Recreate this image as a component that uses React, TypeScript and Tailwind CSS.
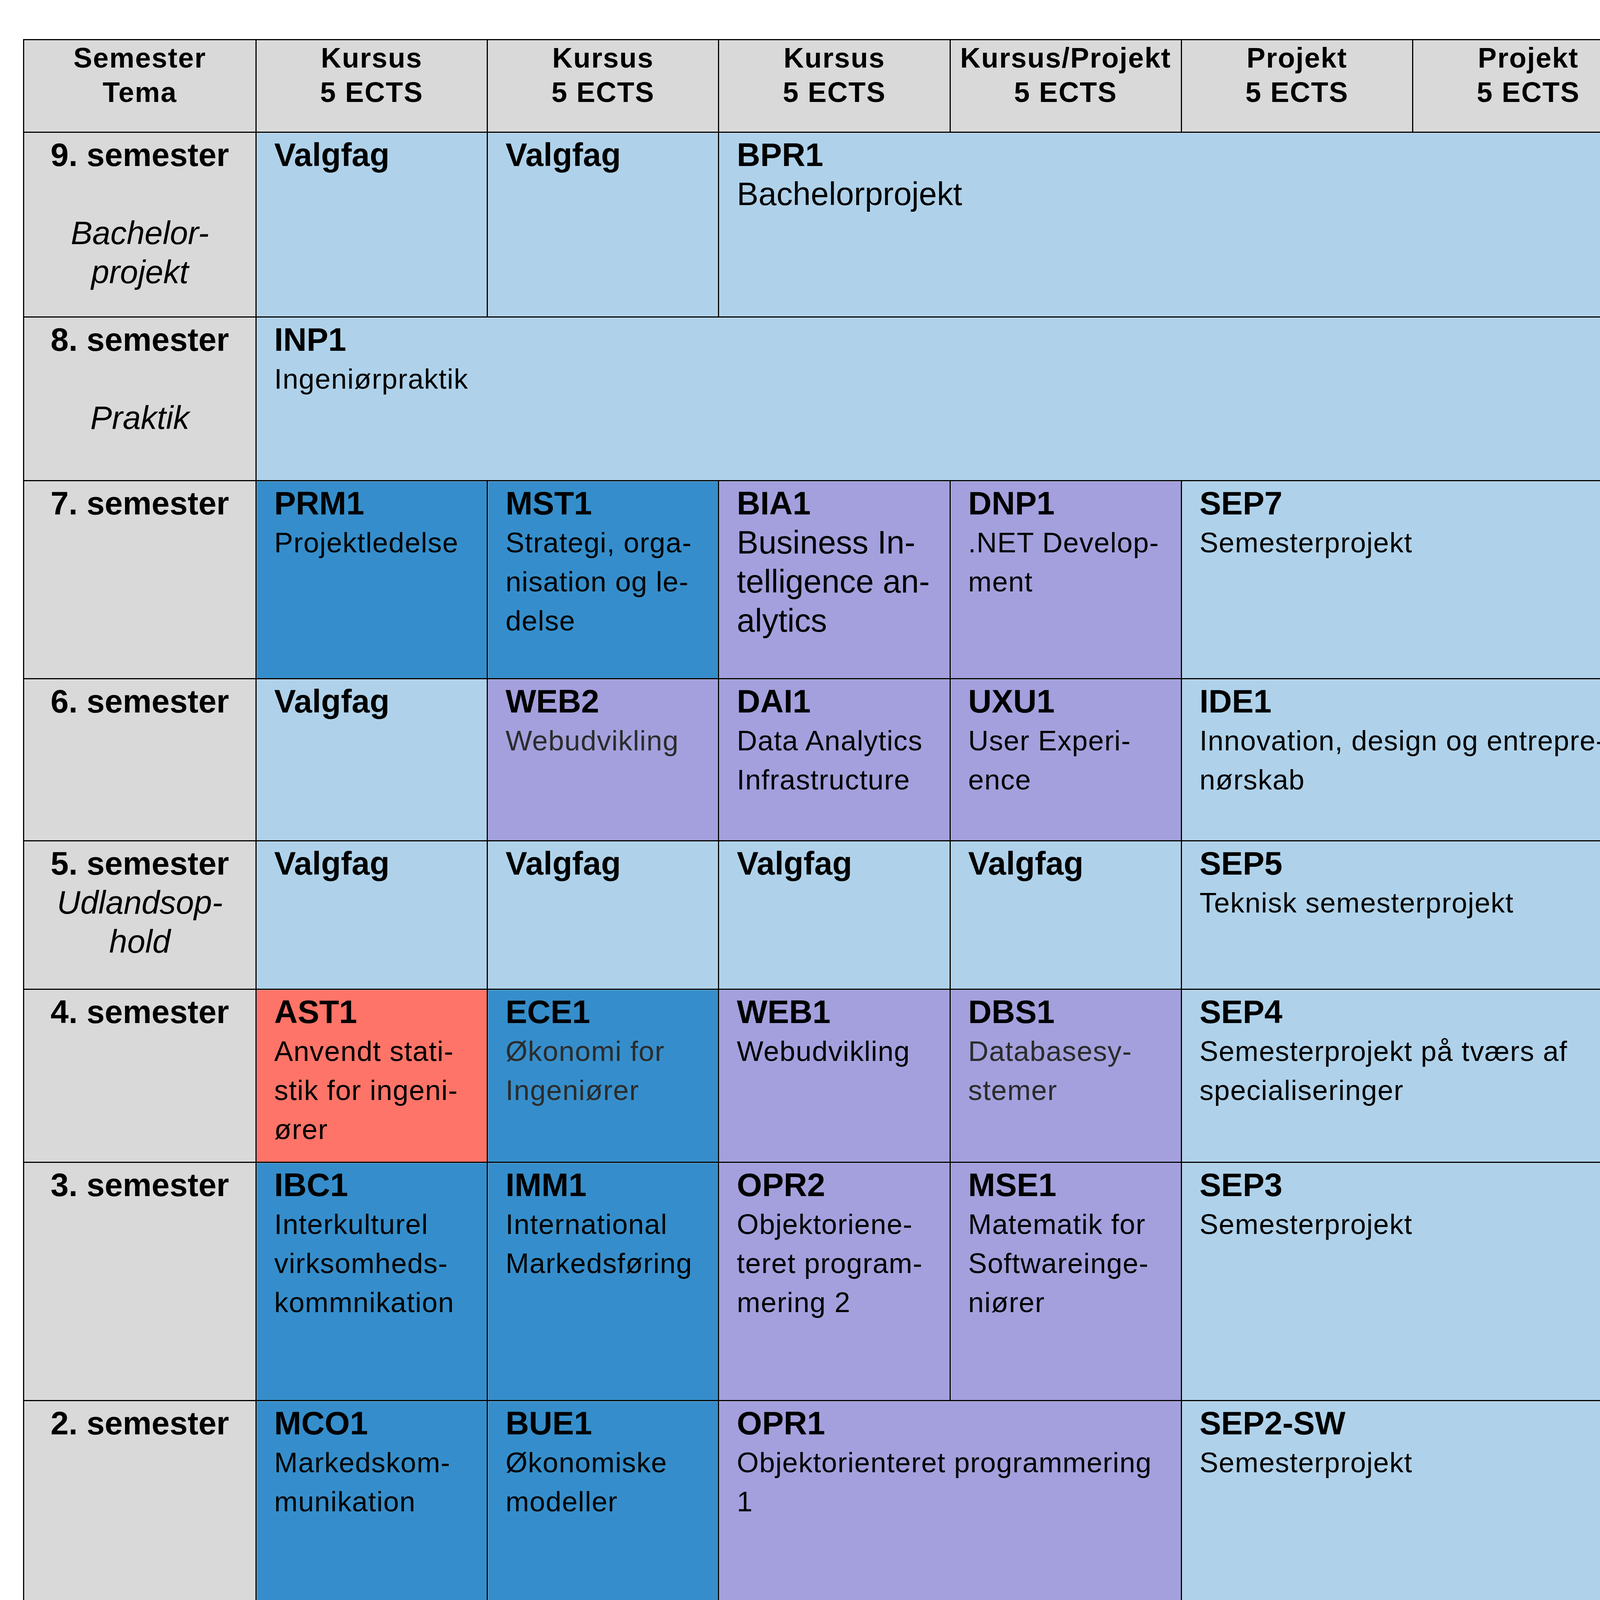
import React from 'react';

type Tone = 'gray' | 'light' | 'dark' | 'purple' | 'red';

const toneBg: Record<Tone, string> = {
  gray: 'bg-[#d9d9d9]',
  light: 'bg-[#afd2ea]',
  dark: 'bg-[#358ecb]',
  purple: 'bg-[#a3a0dd]',
  red: 'bg-[#fe7468]',
};

const edge = 'shadow-[inset_1px_1px_0_rgba(255,255,255,0.45)]';

// plain body line, 72px with the slight letter spacing of the original document
const Line: React.FC<{ children: React.ReactNode; big?: boolean; muted?: boolean }> = ({ children, big, muted }) => (
  <div
    className={
      big
        ? 'text-[83px] leading-[100px] whitespace-nowrap'
        : `text-[72px] leading-[100px] tracking-[1.4px] whitespace-nowrap ${muted ? 'text-[#2b2b2b]' : ''}`
    }
  >
    {children}
  </div>
);

interface CourseProps {
  code: string;
  tone: Tone;
  span?: string;
  smallCode?: boolean;
  children?: React.ReactNode;
}

const Course: React.FC<CourseProps> = ({ code, tone, span = '', smallCode, children }) => (
  <div className={`${toneBg[tone]} ${span} ${edge} pl-[45px] pt-[7px] text-black`}>
    <div
      className={`font-bold leading-[100px] whitespace-nowrap ${smallCode ? 'text-[72px] tracking-[1px]' : 'text-[83px]'}`}
    >
      {code}
    </div>
    {children}
  </div>
);

const Semester: React.FC<{ label: string; theme?: string[]; gap?: boolean }> = ({ label, theme, gap }) => (
  <div className={`bg-[#d9d9d9] ${edge} pt-[7px] text-center text-black`}>
    <div className="text-[83px] font-bold leading-[100px] whitespace-nowrap">{label}</div>
    {gap && <div className="h-[100px]" />}
    {theme?.map((t) => (
      <div key={t} className="text-[83px] italic leading-[100px] whitespace-nowrap">
        {t}
      </div>
    ))}
  </div>
);

const HeaderCell: React.FC<{ top: string; bottom?: string }> = ({ top, bottom = '5 ECTS' }) => (
  <div className={`bg-[#d9d9d9] ${edge} pt-px text-center text-[72px] font-bold leading-[88px] tracking-[2px] text-black`}>
    <div className="whitespace-nowrap">{top}</div>
    <div className="whitespace-nowrap">{bottom}</div>
  </div>
);

const Mixed: React.FC<{ lead: string; rest: string }> = ({ lead, rest }) => (
  <div className="leading-[100px] whitespace-nowrap">
    <span className="text-[83px]">{lead}</span>
    <span className="text-[72px] tracking-[1.4px]"> {rest}</span>
  </div>
);

export default function App() {
  return (
    <div className="min-h-[4758px] w-[4238px] bg-white pt-[100px] pl-[59px] font-['Liberation_Sans',Arial,sans-serif]">
      <div className="grid w-[4151px] grid-cols-[592px_repeat(6,1fr)] grid-rows-[234px_470px_416px_504px_412px_377px_440px_607px_579px_577px] gap-[3px] border-[3px] border-black bg-black">
        {/* Header */}
        <HeaderCell top="Semester" bottom="Tema" />
        <HeaderCell top="Kursus" />
        <HeaderCell top="Kursus" />
        <HeaderCell top="Kursus" />
        <HeaderCell top="Kursus/Projekt" />
        <HeaderCell top="Projekt" />
        <HeaderCell top="Projekt" />

        {/* 9. semester */}
        <Semester label="9. semester" gap theme={['Bachelor-', 'projekt']} />
        <Course code="Valgfag" tone="light" />
        <Course code="Valgfag" tone="light" />
        <Course code="BPR1" tone="light" span="col-span-4">
          <Line big>Bachelorprojekt</Line>
        </Course>

        {/* 8. semester */}
        <Semester label="8. semester" gap theme={['Praktik']} />
        <Course code="INP1" tone="light" span="col-span-6">
          <Line>Ingeniørpraktik</Line>
        </Course>

        {/* 7. semester */}
        <Semester label="7. semester" />
        <Course code="PRM1" tone="dark">
          <Line>Projektledelse</Line>
        </Course>
        <Course code="MST1" tone="dark">
          <Line>Strategi, orga-</Line>
          <Line>nisation og le-</Line>
          <Line>delse</Line>
        </Course>
        <Course code="BIA1" tone="purple">
          <Line big>Business In-</Line>
          <Line big>telligence an-</Line>
          <Line big>alytics</Line>
        </Course>
        <Course code="DNP1" tone="purple">
          <Line>.NET Develop-</Line>
          <Line>ment</Line>
        </Course>
        <Course code="SEP7" tone="light" span="col-span-2">
          <Line>Semesterprojekt</Line>
        </Course>

        {/* 6. semester */}
        <Semester label="6. semester" />
        <Course code="Valgfag" tone="light" />
        <Course code="WEB2" tone="purple">
          <Line muted>Webudvikling</Line>
        </Course>
        <Course code="DAI1" tone="purple">
          <Line>Data Analytics</Line>
          <Line>Infrastructure</Line>
        </Course>
        <Course code="UXU1" tone="purple">
          <Line>User Experi-</Line>
          <Line>ence</Line>
        </Course>
        <Course code="IDE1" tone="light" span="col-span-2">
          <Line>Innovation, design og entrepre-</Line>
          <Line>nørskab</Line>
        </Course>

        {/* 5. semester */}
        <Semester label="5. semester" theme={['Udlandsop-', 'hold']} />
        <Course code="Valgfag" tone="light" />
        <Course code="Valgfag" tone="light" />
        <Course code="Valgfag" tone="light" />
        <Course code="Valgfag" tone="light" />
        <Course code="SEP5" tone="light" span="col-span-2">
          <Line>Teknisk semesterprojekt</Line>
        </Course>

        {/* 4. semester */}
        <Semester label="4. semester" />
        <Course code="AST1" tone="red">
          <Line>Anvendt stati-</Line>
          <Line>stik for ingeni-</Line>
          <Line>ører</Line>
        </Course>
        <Course code="ECE1" tone="dark">
          <Line muted>Økonomi for</Line>
          <Line muted>Ingeniører</Line>
        </Course>
        <Course code="WEB1" tone="purple">
          <Line>Webudvikling</Line>
        </Course>
        <Course code="DBS1" tone="purple">
          <Line muted>Databasesy-</Line>
          <Line muted>stemer</Line>
        </Course>
        <Course code="SEP4" tone="light" span="col-span-2">
          <Line>Semesterprojekt på tværs af</Line>
          <Line>specialiseringer</Line>
        </Course>

        {/* 3. semester */}
        <Semester label="3. semester" />
        <Course code="IBC1" tone="dark">
          <Line>Interkulturel</Line>
          <Line>virksomheds-</Line>
          <Line>kommnikation</Line>
        </Course>
        <Course code="IMM1" tone="dark">
          <Line>International</Line>
          <Line>Markedsføring</Line>
        </Course>
        <Course code="OPR2" tone="purple">
          <Line>Objektoriene-</Line>
          <Line>teret program-</Line>
          <Line>mering 2</Line>
        </Course>
        <Course code="MSE1" tone="purple">
          <Line>Matematik for</Line>
          <Line>Softwareinge-</Line>
          <Line>niører</Line>
        </Course>
        <Course code="SEP3" tone="light" span="col-span-2">
          <Line>Semesterprojekt</Line>
        </Course>

        {/* 2. semester */}
        <Semester label="2. semester" />
        <Course code="MCO1" tone="dark">
          <Line>Markedskom-</Line>
          <Line>munikation</Line>
        </Course>
        <Course code="BUE1" tone="dark">
          <Line>Økonomiske</Line>
          <Line>modeller</Line>
        </Course>
        <Course code="OPR1" tone="purple" span="col-span-2">
          <Line>Objektorienteret programmering</Line>
          <Line>1</Line>
        </Course>
        <Course code="SEP2-SW" tone="light" span="col-span-2">
          <Line>Semesterprojekt</Line>
        </Course>

        {/* 1. semester */}
        <Semester label="1. semester" />
        <Course code="ING1" tone="red" span="col-span-3">
          <Line big>Ingeniørkompetencer</Line>
          <Mixed lead="ST" rest="Introduktion til bæredygtig omstilling" />
          <Mixed lead="SW" rest="Introduktion til Softwareprogrammering" />
          <Mixed lead="MA" rest="Maskinteknisk produktudvikling" />
        </Course>
        <Course code="MATX" tone="red">
          <Line>Grundlæggen-</Line>
          <Line>de matematik</Line>
        </Course>
        <Course code="SEP1" tone="light" span="col-span-2" smallCode>
          <Line>Semesterprojekt</Line>
          <Line>ITB1 Introduktion til forretnings-</Line>
          <Line>forståelse</Line>
        </Course>
      </div>
    </div>
  );
}
